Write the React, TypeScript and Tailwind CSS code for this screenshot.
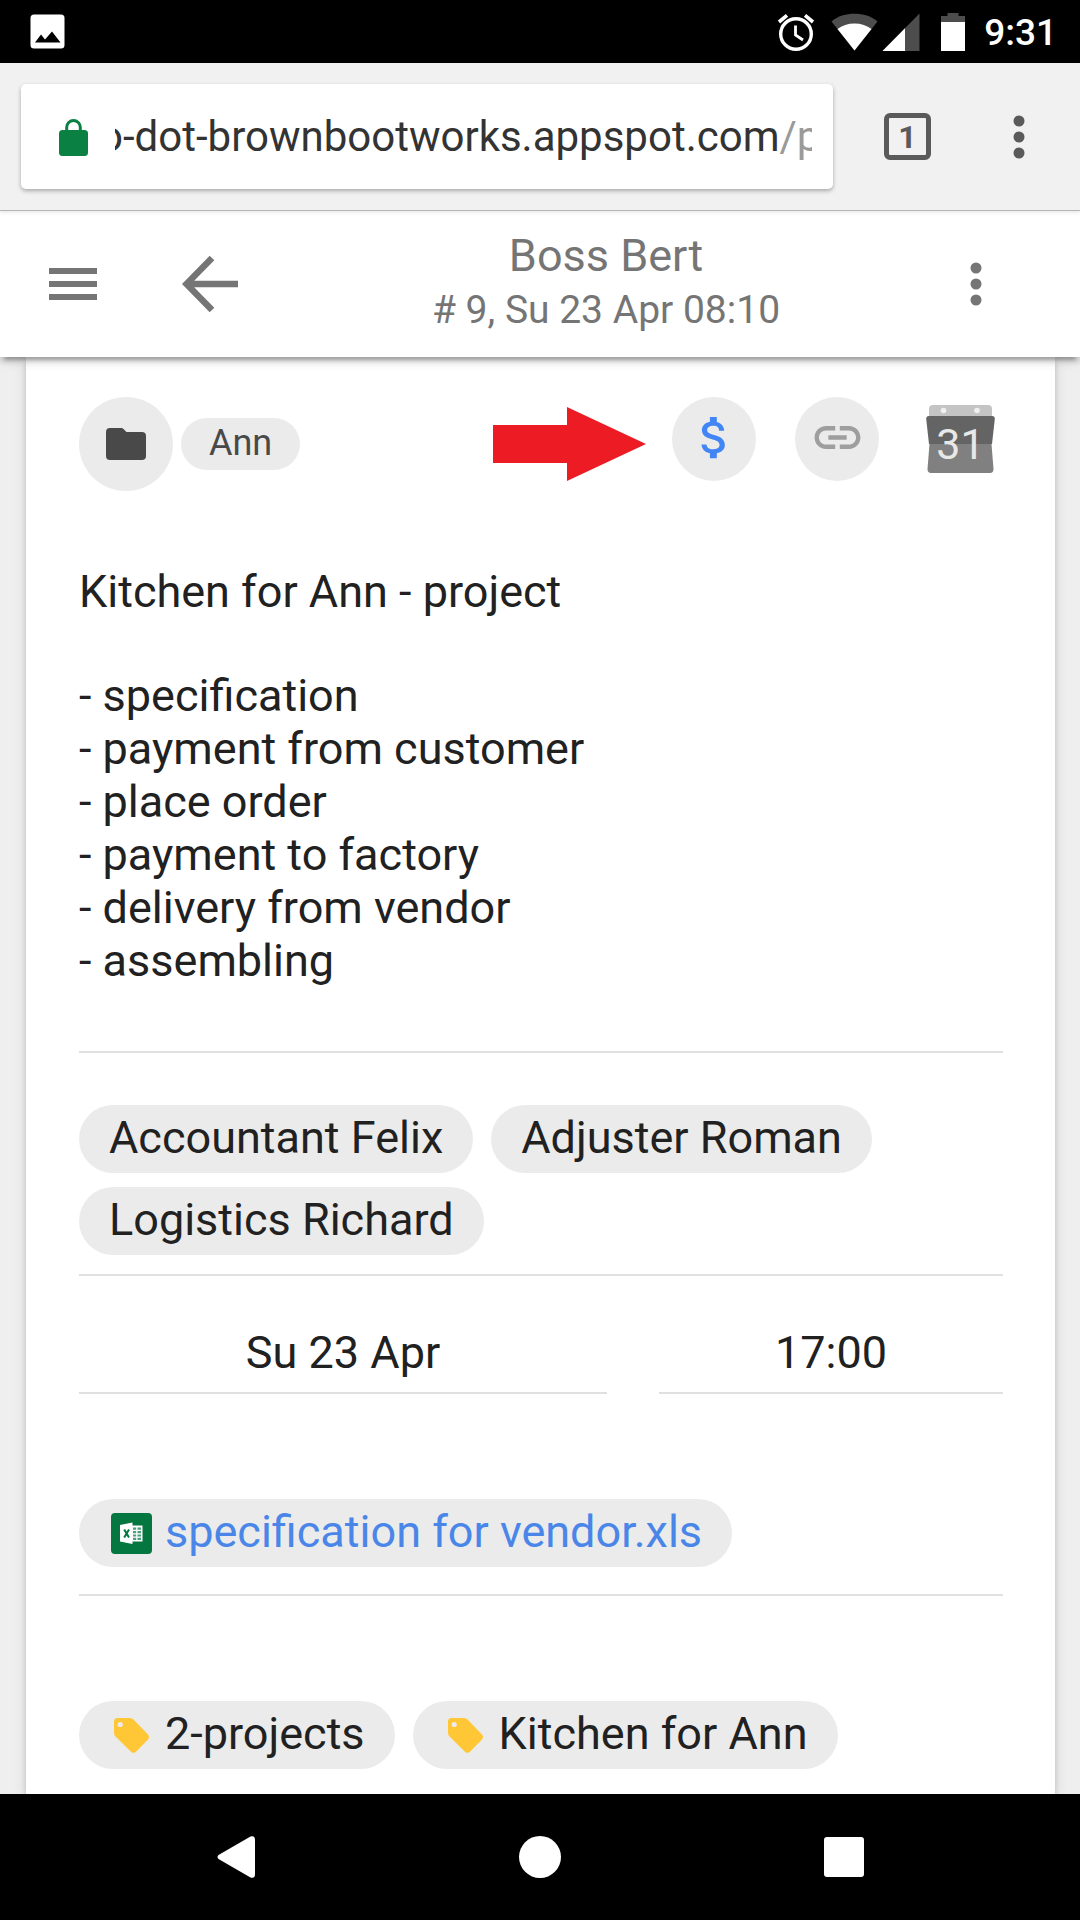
import type { ReactNode } from "react";

const steps = [
  "- specification",
  "- payment from customer",
  "- place order",
  "- payment to factory",
  "- delivery from vendor",
  "- assembling",
];

const people = ["Accountant Felix", "Adjuster Roman", "Logistics Richard"];
const tags = ["2-projects", "Kitchen for Ann"];

function StatusBar() {
  return (
    <div className="flex h-[63px] items-center bg-black pr-[23px] pl-[30px] text-white">
      <svg width="35" height="35" viewBox="0 0 35 35" aria-hidden="true">
        <rect x="0.5" y="0.5" width="34" height="34" rx="3.5" fill="#fff" />
        <path d="M5 28.5 11 20.5 15 25.5 22 17.5 30.5 28.5Z" fill="#000" />
      </svg>
      <svg className="ml-auto" width="38" height="38" viewBox="0 0 38 38" fill="none" stroke="#fff" aria-hidden="true">
        <circle cx="19" cy="21" r="15.3" strokeWidth="3.4" />
        <path d="M18.5 12.5V22l7.5 5" strokeWidth="2.8" />
        <path d="M2 9 10 2.3M36 9 28 2.3" strokeWidth="3.6" />
      </svg>
      <svg className="ml-4" width="47" height="38" viewBox="0 0 47 38" aria-hidden="true">
        <path d="M23.500 37.500 0.500 8.500C7 3 15 0.800 23.500 0.800S40 3 46.500 8.500Z" fill="#4d4d4d" />
        <path d="M23.500 37.500 6.500 16C11 12.500 17 10.500 23.500 10.500S36 12.500 40.500 16Z" fill="#fff" />
      </svg>
      <svg className="ml-1" width="38" height="38" viewBox="0 0 38 38" aria-hidden="true">
        <path d="M37.500 0.500V38H0.500Z" fill="#4d4d4d" />
        <path d="M23 15.300V38H0.500Z" fill="#fff" />
      </svg>
      <svg className="ml-[21px]" width="24" height="38" viewBox="0 0 24 38" aria-hidden="true">
        <path d="M6.500 0H17.500V3H24V10H0V3H6.500Z" fill="#4d4d4d" />
        <path d="M0 9H24V38H0Z" fill="#fff" />
      </svg>
      <span className="ml-[19px] pt-0.5 text-[37px] leading-[44px] font-medium">9:31</span>
    </div>
  );
}

function Dots() {
  return (
    <svg width="12" height="44" viewBox="0 0 12 44" fill="currentColor" aria-hidden="true">
      <circle cx="6" cy="6" r="5.500" />
      <circle cx="6" cy="22" r="5.500" />
      <circle cx="6" cy="38" r="5.500" />
    </svg>
  );
}

function BrowserBar() {
  return (
    <div className="relative z-20 flex h-[148px] items-center border-b border-[#b5b5b5] bg-[#f1f1f1] pr-[55px] pl-[21px] shadow-[0_2px_3px_rgba(0,0,0,0.08)]">
      <div className="flex h-[105px] flex-1 items-center rounded-[5px] bg-white pr-[21px] pl-[38px] shadow-[0_2px_4px_rgba(0,0,0,0.3)]">
        <svg className="shrink-0" width="29" height="38" viewBox="0 0 29 38" aria-hidden="true">
          <path d="M7.700 14V9.300a6.800 6.800 0 0 1 13.600 0V14" fill="none" stroke="#0b8043" strokeWidth="3" />
          <rect x="0" y="12" width="29" height="26" rx="3.500" fill="#0b8043" />
        </svg>
        <div className="ml-[27px] flex w-0 flex-1 overflow-hidden text-[42px] leading-[53px]">
          <input
            className="-ml-4 field-sizing-content shrink-0 bg-transparent text-[#333333] outline-none"
            aria-label="Web address"
            defaultValue="o-dot-brownbootworks.appspot.com"
          />
          <span className="text-[#9a9a9a]">/p</span>
        </div>
      </div>
      <button
        className="ml-[51px] flex size-[47px] items-center justify-center rounded-[6px] border-[5px] border-[#5a5a5a] font-[Roboto] text-[32px] leading-[36px] font-bold text-[#5a5a5a]"
        aria-label="Open tabs"
      >
        1
      </button>
      <button className="ml-[82px] text-[#5a5a5a]" aria-label="Browser menu">
        <Dots />
      </button>
    </div>
  );
}

function AppHeader() {
  return (
    <header className="relative z-10 flex h-[146px] items-center bg-white pr-[98px] pl-[49px] text-[#757575] shadow-[0_5px_5px_rgba(0,0,0,0.14),0_8px_3px_-5px_rgba(0,0,0,0.2),0_3px_13px_rgba(0,0,0,0.12)]">
      <button aria-label="Menu">
        <svg width="48" height="32" viewBox="0 0 48 32" fill="currentColor" aria-hidden="true">
          <path d="M0 0H48V6H0ZM0 13H48V19H0ZM0 26H48V32H0Z" />
        </svg>
      </button>
      <button className="ml-[85px]" aria-label="Back">
        <svg width="56" height="58" viewBox="0 0 56 58" fill="none" stroke="currentColor" strokeWidth="6.500" aria-hidden="true">
          <path d="M30 3 4.500 29 30 55M5 29H56" />
        </svg>
      </button>
      <div className="flex-1 pl-1 text-center">
        <h1 className="text-[45px] leading-[53px]">Boss Bert</h1>
        <p className="text-[39px] leading-[57px]"># 9, Su 23 Apr 08:10</p>
      </div>
      <button aria-label="More options">
        <Dots />
      </button>
    </header>
  );
}

function Chip({ icon, children }: { icon?: ReactNode; children: ReactNode }) {
  return (
    <button className="flex items-center rounded-full bg-[#ebebeb] px-[30px] pt-1.5 pb-[9px]">
      {icon}
      {children}
    </button>
  );
}

function TagIcon() {
  return (
    <svg className="mt-1 mr-[14px] ml-1" width="38" height="38" viewBox="0 0 38 38" aria-hidden="true">
      <path
        d="M4.500 1H17Q19 1 20.500 2.500L35 17.500Q37 20 35 22.500L23 34.800Q20.500 37 18 34.800L2.500 19.500Q1 18 1 16V4.500Q1 1 4.500 1Z"
        fill="#ffc736"
      />
      <circle cx="7.200" cy="7.500" r="2.600" fill="#ebebeb" />
    </svg>
  );
}

function SheetIcon() {
  return (
    <svg className="mt-1 mr-[13px] ml-0.5" width="41" height="41" viewBox="0 0 41 41" aria-hidden="true">
      <rect width="41" height="41" rx="4" fill="#04763f" />
      <path d="M21 12.500H31.500V28.500H21Z" fill="#fff" />
      <path d="M22 14.500H25.200V16.700H22ZM26.500 14.500H30V16.700H26.500ZM22 18H25.200V20.200H22ZM26.500 18H30V20.200H26.500ZM22 21.400H25.200V23.600H22ZM26.500 21.400H30V23.600H26.500ZM22 24.800H25.200V27H22ZM26.500 24.800H30V27H26.500Z" fill="#4d9f79" />
      <path d="M9 12 21.500 9.500V31L9 28.500Z" fill="#fff" />
      <path d="M13.200 16.500 18 24.500M18 16.500 13.200 24.500" stroke="#04763f" strokeWidth="2" />
    </svg>
  );
}

function CalendarIcon() {
  return (
    <svg width="69" height="70" viewBox="0 0 69 70" aria-hidden="true">
      <rect x="3" y="1" width="63" height="16" rx="4" fill="#c4c4c4" />
      <circle cx="17.500" cy="6.500" r="2.800" fill="#f0f0f0" />
      <circle cx="51" cy="6.500" r="2.800" fill="#f0f0f0" />
      <path d="M3.500 40H65.500L67.500 65Q67.500 69 64 69H5Q1.500 69 1.500 65Z" fill="#808080" />
      <path d="M3 12H66Q69 12 68.800 15L66 40H3L0.200 15Q0 12 3 12Z" fill="#646464" />
      <text x="34.500" y="55" textAnchor="middle" fontFamily="Roboto, sans-serif" fontSize="43" fill="#e8e8e8">
        31
      </text>
    </svg>
  );
}

function ActionRow() {
  return (
    <div className="flex items-start justify-between pr-2">
      <div className="flex items-center gap-2 text-[#494949]">
        <button className="flex size-[94px] items-center justify-center rounded-full bg-[#ebebeb]" aria-label="Folder">
          <svg width="40" height="32" viewBox="0 0 40 32" fill="currentColor" aria-hidden="true">
            <path d="M4 0H15.500Q16.500 0 17.500 1L20.500 4H36Q40 4 40 8V28Q40 32 36 32H4Q0 32 0 28V4Q0 0 4 0Z" />
          </svg>
        </button>
        <button className="h-[52px] rounded-full bg-[#ebebeb] px-7 pb-0.5 text-[36px] leading-[50px]">Ann</button>
      </div>
      <div className="flex items-center">
        <svg className="mt-2.5 mr-[26px]" width="153" height="74" viewBox="0 0 153 74" aria-hidden="true">
          <path d="M0 18H74V0L153 37 74 74V56H0Z" fill="#ed1c24" />
        </svg>
        <button className="mr-[39px] flex size-[84px] items-center justify-center rounded-full bg-[#ebebeb] pb-1 text-[#4285f4]" aria-label="Price">
          <svg width="55" height="55" viewBox="0 0 24 24" fill="currentColor" aria-hidden="true">
            <path d="M11.800 10.900c-2.270-.59-3-1.200-3-2.150 0-1.090 1.010-1.850 2.700-1.850 1.780 0 2.440.85 2.500 2.100h2.210c-.07-1.720-1.120-3.300-3.210-3.810V3h-3v2.160c-1.940.42-3.500 1.680-3.500 3.610 0 2.310 1.910 3.460 4.700 4.130 2.500.6 3 1.480 3 2.410 0 .69-.49 1.790-2.700 1.790-2.060 0-2.870-.92-2.980-2.100h-2.200c.12 2.190 1.760 3.420 3.680 3.830V21h3v-2.150c1.950-.37 3.500-1.500 3.500-3.550 0-2.840-2.430-3.810-4.700-4.400z" />
          </svg>
        </button>
        <button className="mr-[47px] flex size-[84px] items-center justify-center rounded-full bg-[#ebebeb] pb-1 text-[#9e9e9e]" aria-label="Copy link">
          <svg width="55" height="55" viewBox="0 0 24 24" fill="currentColor" aria-hidden="true">
            <path d="M3.900 12c0-1.710 1.390-3.100 3.100-3.100h4V7H7c-2.760 0-5 2.240-5 5s2.240 5 5 5h4v-1.900H7c-1.710 0-3.100-1.390-3.100-3.100zM8 13h8v-2H8v2zm9-6h-4v1.900h4c1.710 0 3.100 1.390 3.100 3.100s-1.390 3.100-3.100 3.100h-4V17h4c2.760 0 5-2.240 5-5s-2.240-5-5-5z" />
          </svg>
        </button>
        <button aria-label="Add to calendar">
          <CalendarIcon />
        </button>
      </div>
    </div>
  );
}

function TaskCard() {
  return (
    <article className="flex-1 bg-white pt-10 pr-[52px] pb-[25px] pl-[53px] text-[45px] leading-[53px] text-[#212121] shadow-[0_5px_5px_rgba(0,0,0,0.14),0_8px_3px_-5px_rgba(0,0,0,0.2),0_3px_13px_rgba(0,0,0,0.12)]">
      <ActionRow />

      <section className="border-b-2 border-[#e0e0e0] pt-[74px] pb-16">
        <h2>Kitchen for Ann - project</h2>
        <div className="mt-[51px]">
          {steps.map((step) => (
            <p key={step}>{step}</p>
          ))}
        </div>
      </section>

      <section className="flex flex-wrap gap-x-[18px] gap-y-[14px] border-b-2 border-[#e0e0e0] pt-[52px] pb-[19px]">
        {people.map((name) => (
          <Chip key={name}>{name}</Chip>
        ))}
      </section>

      <section className="grid grid-cols-[528fr_344fr] gap-x-[52px]">
        <input
          className="min-w-0 border-b-2 border-[#e0e0e0] pt-[50px] pb-[13px] text-center outline-none"
          aria-label="Date"
          defaultValue="Su 23 Apr"
        />
        <input
          className="min-w-0 border-b-2 border-[#e0e0e0] pt-[50px] pb-[13px] text-center outline-none"
          aria-label="Time"
          defaultValue="17:00"
        />
      </section>

      <section className="flex border-b-2 border-[#e0e0e0] pt-[105px] pb-[27px]">
        <a
          href="#specification"
          className="flex items-center rounded-full bg-[#ebebeb] px-[30px] pt-1.5 pb-[9px] text-[#4a86e8]"
        >
          <SheetIcon />
          specification for vendor.xls
        </a>
      </section>

      <section className="flex flex-wrap gap-x-[18px] gap-y-[14px] pt-[105px]">
        {tags.map((tag) => (
          <Chip key={tag} icon={<TagIcon />}>
            {tag}
          </Chip>
        ))}
      </section>
    </article>
  );
}

function NavBar() {
  return (
    <nav className="relative z-10 flex h-[126px] items-center justify-between bg-black pr-[216px] pl-[216px] text-white">
      <button aria-label="Back">
        <svg width="40" height="42" viewBox="0 0 40 42" fill="currentColor" aria-hidden="true">
          <path d="M2.500 19 34.500 0.500Q39 -1 39 4V38Q39 43 34.500 41.500L2.500 23Q0.500 21 2.500 19Z" />
        </svg>
      </button>
      <button className="size-[42px] rounded-full bg-white" aria-label="Home" />
      <button className="size-10 rounded-[3px] bg-white" aria-label="Recent apps" />
    </nav>
  );
}

export default function App() {
  return (
    <div className="flex min-h-screen flex-col bg-[#efefef] font-[Roboto,sans-serif]">
      <StatusBar />
      <BrowserBar />
      <AppHeader />
      <main className="flex flex-1 flex-col pr-[25px] pl-[26px]">
        <TaskCard />
      </main>
      <NavBar />
    </div>
  );
}
